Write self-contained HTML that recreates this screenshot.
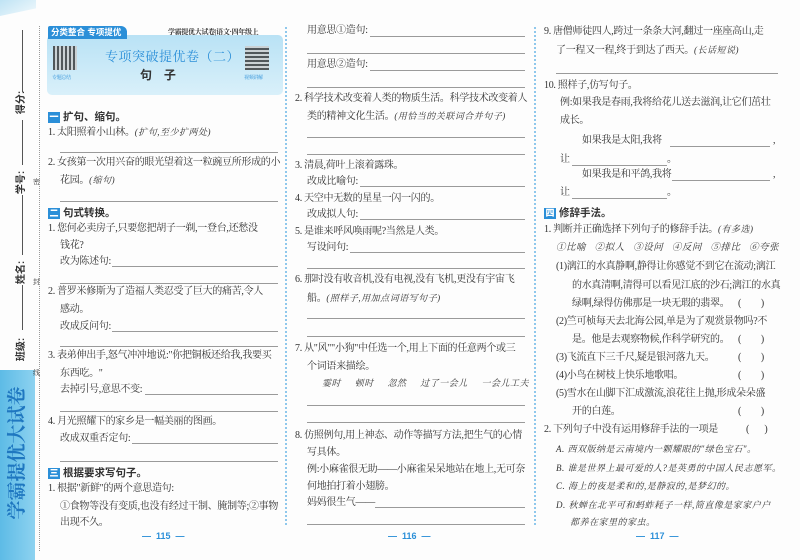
<!DOCTYPE html>
<html><head><meta charset="utf-8"><style>
body{margin:0;width:800px;height:560px;background:#fdfdfd;position:relative;overflow:hidden;font-family:"Liberation Serif","Noto Serif CJK SC",serif;color:#333}
.t{position:absolute;font-size:10px;line-height:14px;white-space:nowrap;letter-spacing:-0.3px}
.k{font-family:"Liberation Serif","Noto Serif CJK SC",serif;font-style:italic;font-size:9px;letter-spacing:0.5px}
.l{position:absolute;height:1px;background:#9a9a9a}
.h{position:absolute;font-size:10.5px;font-weight:bold;font-family:"Liberation Sans","Noto Sans CJK SC",sans-serif;white-space:nowrap}
.h b{display:inline-block;background:#2b8fd8;color:#fff;font-size:9px;width:12px;height:11px;line-height:11px;text-align:center;margin-right:3px;vertical-align:0}
.vd{position:absolute;width:0;border-left:2px dotted #8fc8ec}
.pg{position:absolute;font-size:9px;color:#2b8fd8;font-family:"Liberation Sans",sans-serif;font-weight:bold}
.m{position:absolute;font-size:10px;font-weight:bold;font-family:"Liberation Sans","Noto Sans CJK SC",sans-serif;transform:rotate(-90deg)}
.ml{position:absolute;width:1px;background:#555;left:22px}
</style></head><body>
<div style="position:absolute;left:0;top:0;width:36px;height:16px;background:linear-gradient(160deg,#bfe3f4,#e8f5fb);transform:skewY(-12deg);transform-origin:0 0"></div>
<div class="ml" style="top:30px;height:62px"></div>
<div class="m" style="left:8px;top:95px">得分:</div>
<div class="ml" style="top:120px;height:45px"></div>
<div class="m" style="left:8px;top:175px">学号:</div>
<div class="ml" style="top:195px;height:60px"></div>
<div class="m" style="left:8px;top:265px">姓名:</div>
<div class="ml" style="top:285px;height:45px"></div>
<div class="m" style="left:8px;top:342px">班级:</div>
<div style="position:absolute;left:0;top:370px;width:35px;height:190px;background:linear-gradient(90deg,#5dbbe6,#8dd2f0)"></div>
<div style="position:absolute;left:-56px;top:437px;width:148px;height:32px;line-height:32px;transform:rotate(-90deg);font-size:19px;color:#1f77c0;font-family:'Liberation Serif','Noto Serif CJK SC',serif;font-weight:bold;text-align:center;white-space:nowrap">学霸提优大试卷</div>
<div style="position:absolute;left:39px;top:26px;height:525px;border-left:1px dotted #999"></div>
<div class="t" style="left:33px;top:175px;font-size:7px">密</div>
<div class="t" style="left:33px;top:275px;font-size:7px">封</div>
<div class="t" style="left:33px;top:366px;font-size:7px">线</div>
<div class="vd" style="left:285px;top:27px;height:498px"></div>
<div class="vd" style="left:534px;top:27px;height:498px"></div>
<div style="position:absolute;left:47px;top:35px;width:236px;height:60px;background:linear-gradient(180deg,#b9e2f5,#d9f0fa);border-radius:5px"></div>
<div style="position:absolute;left:48px;top:26px;width:76px;height:13px;background:#2b8fd8;color:#fff;font-size:8.5px;line-height:13px;font-family:'Liberation Sans','Noto Sans CJK SC',sans-serif;font-weight:bold;padding-left:3px;border-radius:2px 6px 0 0;white-space:nowrap">分类整合 专项提优</div>
<div class="t" style="left:168px;top:25px;font-size:7px;font-weight:bold">学霸提优大试卷|语文·四年级上</div>
<div style="position:absolute;left:53px;top:46px;width:24px;height:24px;background:repeating-linear-gradient(90deg,#333 0 2px,#ccc 2px 4px);opacity:.8"></div>
<div style="position:absolute;left:245px;top:46px;width:24px;height:24px;background:repeating-linear-gradient(0deg,#333 0 2px,#ccc 2px 4px);opacity:.8"></div>
<div class="t" style="left:52px;top:72px;font-size:5px;color:#2b8fd8">专题总结</div>
<div class="t" style="left:244px;top:72px;font-size:5px;color:#2b8fd8">视频讲解</div>
<div class="t" style="left:105px;top:50px;font-size:13px;color:#2b8fd8;letter-spacing:0.5px">专项突破提优卷（二）</div>
<div class="t" style="left:140px;top:68px;font-size:12px;font-weight:bold;font-family:'Liberation Sans','Noto Sans CJK SC',sans-serif">句&nbsp;&nbsp;&nbsp;&nbsp;子</div>

<div class="h" style="left:48px;top:109px"><b>一</b>扩句、缩句。</div>
<div class="t" style="left:48px;top:125px">1. 太阳照着小山林。<span class="k">(扩句,至少扩两处)</span></div>
<div class="l" style="left:60px;top:152px;width:218px"></div>
<div class="t" style="left:48px;top:156px">2. 女孩第一次用兴奋的眼光望着这一粒豌豆所形成的小</div>
<div class="t" style="left:60px;top:173px">花园。<span class="k">(缩句)</span></div>
<div class="l" style="left:60px;top:201px;width:218px"></div>
<div class="h" style="left:48px;top:205px"><b>二</b>句式转换。</div>
<div class="t" style="left:48px;top:222px">1. 您何必卖房子,只要您把胡子一剃,一登台,还愁没</div>
<div class="t" style="left:60px;top:239px">钱花?</div>
<div class="t" style="left:60px;top:255px">改为陈述句:</div>
<div class="l" style="left:112px;top:266px;width:166px"></div>
<div class="l" style="left:60px;top:283px;width:218px"></div>
<div class="t" style="left:48px;top:285px">2. 普罗米修斯为了造福人类忍受了巨大的痛苦,令人</div>
<div class="t" style="left:60px;top:303px">感动。</div>
<div class="t" style="left:60px;top:320px">改成反问句:</div>
<div class="l" style="left:112px;top:331px;width:166px"></div>
<div class="l" style="left:60px;top:346px;width:218px"></div>
<div class="t" style="left:48px;top:349px">3. 表弟伸出手,怒气冲冲地说:"你把铜板还给我,我要买</div>
<div class="t" style="left:60px;top:367px">东西吃。"</div>
<div class="t" style="left:60px;top:383px">去掉引号,意思不变:</div>
<div class="l" style="left:145px;top:394px;width:133px"></div>
<div class="l" style="left:60px;top:411px;width:218px"></div>
<div class="t" style="left:48px;top:415px">4. 月光照耀下的家乡是一幅美丽的图画。</div>
<div class="t" style="left:60px;top:432px">改成双重否定句:</div>
<div class="l" style="left:132px;top:443px;width:146px"></div>
<div class="l" style="left:60px;top:461px;width:218px"></div>
<div class="h" style="left:48px;top:465px"><b>三</b>根据要求写句子。</div>
<div class="t" style="left:48px;top:482px">1. 根据"新鲜"的两个意思造句:</div>
<div class="t" style="left:60px;top:500px">①食物等没有变质,也没有经过干制、腌制等;②事物</div>
<div class="t" style="left:60px;top:516px">出现不久。</div>
<div class="pg" style="left:142px;top:531px">—&nbsp;&nbsp;115&nbsp;&nbsp;—</div>

<div class="t" style="left:307px;top:24px">用意思①造句:</div>
<div class="l" style="left:370px;top:36px;width:155px"></div>
<div class="l" style="left:307px;top:53px;width:218px"></div>
<div class="t" style="left:307px;top:58px">用意思②造句:</div>
<div class="l" style="left:370px;top:70px;width:155px"></div>
<div class="l" style="left:307px;top:87px;width:218px"></div>
<div class="t" style="left:295px;top:92px">2. 科学技术改变着人类的物质生活。科学技术改变着人</div>
<div class="t" style="left:307px;top:109px">类的精神文化生活。<span class="k">(用恰当的关联词合并句子)</span></div>
<div class="l" style="left:307px;top:137px;width:218px"></div>
<div class="l" style="left:307px;top:154px;width:218px"></div>
<div class="t" style="left:295px;top:159px">3. 清晨,荷叶上滚着露珠。</div>
<div class="t" style="left:307px;top:175px">改成比喻句:</div>
<div class="l" style="left:360px;top:186px;width:165px"></div>
<div class="t" style="left:295px;top:192px">4. 天空中无数的星星一闪一闪的。</div>
<div class="t" style="left:307px;top:208px">改成拟人句:</div>
<div class="l" style="left:360px;top:219px;width:165px"></div>
<div class="t" style="left:295px;top:225px">5. 是谁来呼风唤雨呢?当然是人类。</div>
<div class="t" style="left:307px;top:241px">写设问句:</div>
<div class="l" style="left:350px;top:252px;width:175px"></div>
<div class="l" style="left:307px;top:268px;width:218px"></div>
<div class="t" style="left:295px;top:273px">6. 那时没有收音机,没有电视,没有飞机,更没有宇宙飞</div>
<div class="t" style="left:307px;top:291px">船。<span class="k">(照样子,用加点词语写句子)</span></div>
<div class="l" style="left:307px;top:318px;width:218px"></div>
<div class="l" style="left:307px;top:336px;width:218px"></div>
<div class="t" style="left:295px;top:342px">7. 从"风""小狗"中任选一个,用上下面的任意两个或三</div>
<div class="t" style="left:307px;top:360px">个词语来描绘。</div>
<div class="t k" style="left:322px;top:376px">霎时&nbsp;&nbsp;&nbsp;&nbsp;&nbsp;顿时&nbsp;&nbsp;&nbsp;&nbsp;&nbsp;忽然&nbsp;&nbsp;&nbsp;&nbsp;&nbsp;过了一会儿&nbsp;&nbsp;&nbsp;&nbsp;&nbsp;一会儿工夫</div>
<div class="l" style="left:307px;top:405px;width:218px"></div>
<div class="l" style="left:307px;top:422px;width:218px"></div>
<div class="t" style="left:295px;top:429px">8. 仿照例句,用上神态、动作等描写方法,把生气的心情</div>
<div class="t" style="left:307px;top:446px">写具体。</div>
<div class="t" style="left:307px;top:463px">例:小麻雀很无助——小麻雀呆呆地站在地上,无可奈</div>
<div class="t" style="left:307px;top:480px">何地拍打着小翅膀。</div>
<div class="t" style="left:307px;top:496px">妈妈很生气——</div>
<div class="l" style="left:375px;top:507px;width:150px"></div>
<div class="l" style="left:307px;top:524px;width:218px"></div>
<div class="pg" style="left:388px;top:531px">—&nbsp;&nbsp;116&nbsp;&nbsp;—</div>

<div class="t" style="left:544px;top:25px">9. 唐僧师徒四人,跨过一条条大河,翻过一座座高山,走</div>
<div class="t" style="left:556px;top:43px">了一程又一程,终于到达了西天。<span class="k">(长话短说)</span></div>
<div class="l" style="left:556px;top:73px;width:222px"></div>
<div class="t" style="left:544px;top:79px">10. 照样子,仿写句子。</div>
<div class="t" style="left:560px;top:96px">例:如果我是春雨,我将给花儿送去滋润,让它们茁壮</div>
<div class="t" style="left:560px;top:114px">成长。</div>
<div class="t" style="left:582px;top:134px">如果我是太阳,我将</div>
<div class="l" style="left:670px;top:146px;width:100px"></div>
<div class="t" style="left:773px;top:134px">,</div>
<div class="t" style="left:560px;top:153px">让</div>
<div class="l" style="left:572px;top:165px;width:95px"></div>
<div class="t" style="left:667px;top:153px">。</div>
<div class="t" style="left:582px;top:168px">如果我是和平鸽,我将</div>
<div class="l" style="left:672px;top:180px;width:98px"></div>
<div class="t" style="left:773px;top:168px">,</div>
<div class="t" style="left:560px;top:186px">让</div>
<div class="l" style="left:572px;top:198px;width:95px"></div>
<div class="t" style="left:667px;top:186px">。</div>
<div class="h" style="left:544px;top:205px"><b>四</b>修辞手法。</div>
<div class="t" style="left:544px;top:222px">1. 判断并正确选择下列句子的修辞手法。<span class="k">(有多选)</span></div>
<div class="t k" style="left:556px;top:241px;font-size:9.5px">①比喻&nbsp;&nbsp;&nbsp;②拟人&nbsp;&nbsp;&nbsp;③设问&nbsp;&nbsp;&nbsp;④反问&nbsp;&nbsp;&nbsp;⑤排比&nbsp;&nbsp;&nbsp;⑥夸张</div>
<div class="t" style="left:556px;top:260px">(1)漓江的水真静啊,静得让你感觉不到它在流动;漓江</div>
<div class="t" style="left:572px;top:279px">的水真清啊,清得可以看见江底的沙石;漓江的水真</div>
<div class="t" style="left:572px;top:297px">绿啊,绿得仿佛那是一块无瑕的翡翠。</div>
<div class="t" style="left:738px;top:297px">(&nbsp;&nbsp;&nbsp;&nbsp;&nbsp;&nbsp;&nbsp;&nbsp;&nbsp;)</div>
<div class="t" style="left:556px;top:315px">(2)竺可桢每天去北海公园,单是为了观赏景物吗?不</div>
<div class="t" style="left:572px;top:333px">是。他是去观察物候,作科学研究的。</div>
<div class="t" style="left:738px;top:333px">(&nbsp;&nbsp;&nbsp;&nbsp;&nbsp;&nbsp;&nbsp;&nbsp;&nbsp;)</div>
<div class="t" style="left:556px;top:351px">(3)飞流直下三千尺,疑是银河落九天。</div>
<div class="t" style="left:738px;top:351px">(&nbsp;&nbsp;&nbsp;&nbsp;&nbsp;&nbsp;&nbsp;&nbsp;&nbsp;)</div>
<div class="t" style="left:556px;top:369px">(4)小鸟在树枝上快乐地歌唱。</div>
<div class="t" style="left:738px;top:369px">(&nbsp;&nbsp;&nbsp;&nbsp;&nbsp;&nbsp;&nbsp;&nbsp;&nbsp;)</div>
<div class="t" style="left:556px;top:387px">(5)雪水在山脚下汇成激流,浪花往上抛,形成朵朵盛</div>
<div class="t" style="left:572px;top:405px">开的白莲。</div>
<div class="t" style="left:738px;top:405px">(&nbsp;&nbsp;&nbsp;&nbsp;&nbsp;&nbsp;&nbsp;&nbsp;&nbsp;)</div>
<div class="t" style="left:544px;top:423px">2. 下列句子中没有运用修辞手法的一项是</div>
<div class="t" style="left:746px;top:423px">(&nbsp;&nbsp;&nbsp;&nbsp;&nbsp;&nbsp;&nbsp;)</div>
<div class="t k" style="left:556px;top:442px">A. 西双版纳是云南境内一颗耀眼的"绿色宝石"。</div>
<div class="t k" style="left:556px;top:461px">B. 谁是世界上最可爱的人?是英勇的中国人民志愿军。</div>
<div class="t k" style="left:556px;top:479px">C. 海上的夜是柔和的,是静寂的,是梦幻的。</div>
<div class="t k" style="left:556px;top:498px">D. 秋蝉在北平可和蚂蚱耗子一样,简直像是家家户户</div>
<div class="t k" style="left:570px;top:515px">都养在家里的家虫。</div>
<div class="pg" style="left:636px;top:531px">—&nbsp;&nbsp;117&nbsp;&nbsp;—</div>
</body></html>
